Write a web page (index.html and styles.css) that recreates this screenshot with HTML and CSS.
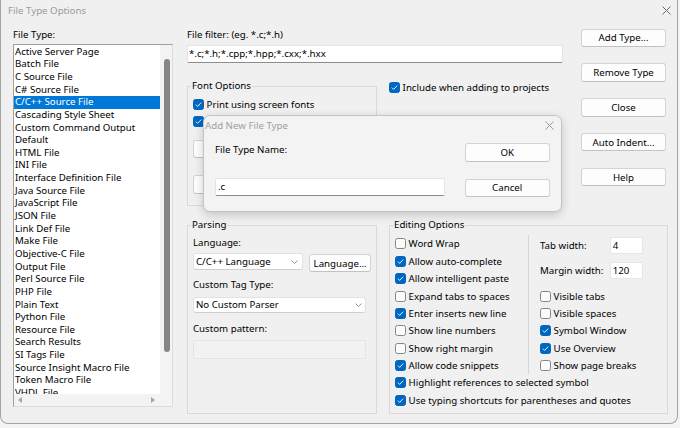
FILE: index.html
```html
<!DOCTYPE html>
<html>
<head>
<meta charset="utf-8">
<title>File Type Options</title>
<link rel="stylesheet" href="styles.css">
</head>
<body>
<div class="window">
  <div class="titlebar">
    <span class="title">File Type Options</span>
    <svg class="xicon" width="9" height="9" viewBox="0 0 9 9"><path d="M0.5 0.5 L8.5 8.5 M8.5 0.5 L0.5 8.5" stroke="#6f6f6f" stroke-width="1" fill="none"/></svg>
  </div>
  <div class="main">
    <div class="col-left">
      <div class="label">File Type:</div>
      <div class="listbox">
        <div class="items">
          <div class="item">Active Server Page</div>
          <div class="item">Batch File</div>
          <div class="item">C Source File</div>
          <div class="item">C# Source File</div>
          <div class="item sel">C/C++ Source File</div>
          <div class="item">Cascading Style Sheet</div>
          <div class="item">Custom Command Output</div>
          <div class="item">Default</div>
          <div class="item">HTML File</div>
          <div class="item">INI File</div>
          <div class="item">Interface Definition File</div>
          <div class="item">Java Source File</div>
          <div class="item">JavaScript File</div>
          <div class="item">JSON File</div>
          <div class="item">Link Def File</div>
          <div class="item">Make File</div>
          <div class="item">Objective-C File</div>
          <div class="item">Output File</div>
          <div class="item">Perl Source File</div>
          <div class="item">PHP File</div>
          <div class="item">Plain Text</div>
          <div class="item">Python File</div>
          <div class="item">Resource File</div>
          <div class="item">Search Results</div>
          <div class="item">SI Tags File</div>
          <div class="item">Source Insight Macro File</div>
          <div class="item">Token Macro File</div>
          <div class="item">VHDL File</div>
        </div>
        <div class="vscroll"><div class="thumb"></div></div>
        <div class="hscroll">
          <svg width="4" height="6" viewBox="0 0 4 6"><path d="M4 0 L0 3 L4 6 Z" fill="#a6a6a6"/></svg>
          <svg width="4" height="6" viewBox="0 0 4 6"><path d="M0 0 L4 3 L0 6 Z" fill="#a6a6a6"/></svg>
        </div>
        <div class="corner"></div>
      </div>
    </div>

    <div class="col-right">
      <div class="top">
        <div class="mid">
          <div class="label">File filter: (eg. *.c;*.h)</div>
          <div class="input filter">*.c;*.h;*.cpp;*.hpp;*.cxx;*.hxx</div>
          <div class="mid-row">
            <div class="group font-opts">
              <div class="legend">Font Options</div>
              <div class="cb first"><span class="box on"><svg width="9" height="9" viewBox="0 0 9 9"><path d="M1.8 4.6 L3.6 6.4 L7.2 2.6" stroke="#fff" stroke-width="0.9" fill="none"/></svg></span><span>Print using screen fonts</span></div>
              <div class="cb"><span class="box on"><svg width="9" height="9" viewBox="0 0 9 9"><path d="M1.8 4.6 L3.6 6.4 L7.2 2.6" stroke="#fff" stroke-width="0.9" fill="none"/></svg></span><span></span></div>
              <div class="btn fbtn1"></div>
              <div class="btn fbtn2"></div>
            </div>
            <div class="cb include"><span class="box on"><svg width="9" height="9" viewBox="0 0 9 9"><path d="M1.8 4.6 L3.6 6.4 L7.2 2.6" stroke="#fff" stroke-width="0.9" fill="none"/></svg></span><span>Include when adding to projects</span></div>
          </div>
        </div>
        <div class="buttons">
          <div class="btn">Add Type...</div>
          <div class="btn">Remove Type</div>
          <div class="btn">Close</div>
          <div class="btn">Auto Indent...</div>
          <div class="btn">Help</div>
        </div>
      </div>

      <div class="bottom">
        <div class="group parsing">
          <div class="legend">Parsing</div>
          <div class="label pl1">Language:</div>
          <div class="prow">
            <div class="select sel1"><span>C/C++ Language</span><svg width="7" height="4" viewBox="0 0 7 4"><path d="M0.5 0.5 L3.5 3.5 L6.5 0.5" stroke="#8a8a8a" stroke-width="0.9" fill="none"/></svg></div>
            <div class="btn lbtn">Language...</div>
          </div>
          <div class="label pl2">Custom Tag Type:</div>
          <div class="select sel2"><span>No Custom Parser</span><svg width="7" height="4" viewBox="0 0 7 4"><path d="M0.5 0.5 L3.5 3.5 L6.5 0.5" stroke="#8a8a8a" stroke-width="0.9" fill="none"/></svg></div>
          <div class="label pl3">Custom pattern:</div>
          <div class="dis"></div>
        </div>

        <div class="group editing">
          <div class="legend">Editing Options</div>
          <div class="egrid">
            <div class="ecol">
              <div class="cb"><span class="box"></span><span>Word Wrap</span></div>
              <div class="cb"><span class="box on"><svg width="9" height="9" viewBox="0 0 9 9"><path d="M1.8 4.6 L3.6 6.4 L7.2 2.6" stroke="#fff" stroke-width="0.9" fill="none"/></svg></span><span>Allow auto-complete</span></div>
              <div class="cb"><span class="box on"><svg width="9" height="9" viewBox="0 0 9 9"><path d="M1.8 4.6 L3.6 6.4 L7.2 2.6" stroke="#fff" stroke-width="0.9" fill="none"/></svg></span><span>Allow intelligent paste</span></div>
              <div class="cb"><span class="box"></span><span>Expand tabs to spaces</span></div>
              <div class="cb"><span class="box on"><svg width="9" height="9" viewBox="0 0 9 9"><path d="M1.8 4.6 L3.6 6.4 L7.2 2.6" stroke="#fff" stroke-width="0.9" fill="none"/></svg></span><span>Enter inserts new line</span></div>
              <div class="cb"><span class="box"></span><span>Show line numbers</span></div>
              <div class="cb"><span class="box"></span><span>Show right margin</span></div>
              <div class="cb"><span class="box on"><svg width="9" height="9" viewBox="0 0 9 9"><path d="M1.8 4.6 L3.6 6.4 L7.2 2.6" stroke="#fff" stroke-width="0.9" fill="none"/></svg></span><span>Allow code snippets</span></div>
            </div>
            <div class="ecol ecol-right">
              <div class="tabs">
                <div class="trow"><span class="tlabel">Tab width:</span><span class="num">4</span></div>
                <div class="trow"><span class="tlabel">Margin width:</span><span class="num">120</span></div>
              </div>
              <div class="cb"><span class="box"></span><span>Visible tabs</span></div>
              <div class="cb"><span class="box"></span><span>Visible spaces</span></div>
              <div class="cb"><span class="box on"><svg width="9" height="9" viewBox="0 0 9 9"><path d="M1.8 4.6 L3.6 6.4 L7.2 2.6" stroke="#fff" stroke-width="0.9" fill="none"/></svg></span><span>Symbol Window</span></div>
              <div class="cb"><span class="box on"><svg width="9" height="9" viewBox="0 0 9 9"><path d="M1.8 4.6 L3.6 6.4 L7.2 2.6" stroke="#fff" stroke-width="0.9" fill="none"/></svg></span><span>Use Overview</span></div>
              <div class="cb"><span class="box"></span><span>Show page breaks</span></div>
            </div>
            <div class="cb full"><span class="box on"><svg width="9" height="9" viewBox="0 0 9 9"><path d="M1.8 4.6 L3.6 6.4 L7.2 2.6" stroke="#fff" stroke-width="0.9" fill="none"/></svg></span><span>Highlight references to selected symbol</span></div>
            <div class="cb full"><span class="box on"><svg width="9" height="9" viewBox="0 0 9 9"><path d="M1.8 4.6 L3.6 6.4 L7.2 2.6" stroke="#fff" stroke-width="0.9" fill="none"/></svg></span><span>Use typing shortcuts for parentheses and quotes</span></div>
          </div>
        </div>
      </div>
    </div>
  </div>

  <div class="dialog">
    <div class="dtitle">
      <span>Add New File Type</span>
      <svg width="9" height="9" viewBox="0 0 9 9"><path d="M0.5 0.5 L8.5 8.5 M8.5 0.5 L0.5 8.5" stroke="#9a9a9a" stroke-width="1" fill="none"/></svg>
    </div>
    <div class="dbody">
      <div class="dleft">
        <div class="label dlabel">File Type Name:</div>
        <div class="input dinput">.c</div>
      </div>
      <div class="dbtns">
        <div class="btn ok">OK</div>
        <div class="btn cancel">Cancel</div>
      </div>
    </div>
  </div>
</div>
</body>
</html>
```

FILE: styles.css
```css
* { box-sizing: border-box; }
html, body { margin: 0; padding: 0; }
body {
  width: 680px;
  height: 428px;
  overflow: hidden;
  background: #f4f4f4;
  font-family: "Noto Sans", "Open Sans", sans-serif;
  font-size: 9.7px;
  color: #000;
}

.window {
  position: relative;
  width: 678px;
  height: 424px;
  background: #f0f0f0;
  border: 1px solid #a3a3a3;
  border-top: none;
  border-radius: 0 0 8px 8px;
}

.titlebar {
  height: 20px;
  display: flex;
  align-items: center;
  justify-content: space-between;
  padding: 0 6px 0 7px;
  color: #9b9b9b;
}
.xicon { display: block; }

.main {
  display: grid;
  grid-template-columns: 160px 481px;
  column-gap: 14px;
  padding: 9px 0 0 12px;
}

.label { line-height: 12px; height: 12px; white-space: nowrap; }

/* list box */
.listbox {
  margin-top: 3px;
  height: 363px;
  border: 1px solid;
  border-color: #a0a0a0 #dcdcdc #dcdcdc #a0a0a0;
  background: #fff;
  display: grid;
  grid-template-columns: 146px 12px;
  grid-template-rows: 349px 12px;
}
.items { overflow: hidden; padding-top: 0.7px; }
.item {
  height: 12.65px;
  line-height: 12.65px;
  padding-left: 1px;
  white-space: nowrap;
}
.item.sel { background: #0078d7; color: #fff; }
.vscroll { background: #f3f3f3; padding-top: 14.3px; }
.thumb {
  width: 6px;
  height: 292.5px;
  margin-left: 4px;
  background: #868686;
  border-radius: 3px;
}
.hscroll {
  background: #f3f3f3;
  display: flex;
  justify-content: space-between;
  align-items: center;
  padding: 0 5px 0 4px;
}
.hscroll svg { display: block; }
.corner { background: #f3f3f3; }

/* right side */
.col-right { display: flex; flex-direction: column; }
.top { display: flex; gap: 18px; }
.mid { width: 376px; }

.input {
  background: #fff;
  border: 1px solid #e4e4e4;
  border-bottom-color: #8c8c8c;
  border-radius: 2px;
  height: 18px;
  line-height: 16px;
  padding-left: 1px;
  white-space: nowrap;
  overflow: hidden;
}
.filter { margin-top: 4px; }
.mid-row { display: flex; align-items: flex-start; margin-top: 23px; }

/* group boxes */
.group {
  border: 1px solid #d9d9d9;
  padding: 0 5px;
}
.legend {
  width: fit-content;
  margin: -7px 0 0 -2px;
  padding: 0 1px;
  line-height: 12px;
  height: 12px;
  background: #f0f0f0;
  white-space: nowrap;
}

.font-opts { width: 190px; height: 120px; }
.font-opts .first { margin-top: 3.6px; }
.fbtn1 { width: 90px; height: 19px; margin-top: 9.6px; }
.fbtn2 { width: 90px; height: 18px; margin-top: 17px; }

.cb {
  display: flex;
  align-items: center;
  gap: 2.6px;
  height: 17.35px;
  white-space: nowrap;
}
.box {
  flex: none;
  width: 11px;
  height: 11px;
  border: 1px solid #858585;
  border-radius: 2.5px;
  background: #fbfbfb;
}
.box.on { background: #0067c0; border-color: #0067c0; }
.box svg { display: block; }

.include { margin-left: 12px; margin-top: -7px; }

.buttons {
  width: 85px;
  display: flex;
  flex-direction: column;
  gap: 16.4px;
  margin-top: -0.3px;
}
.btn {
  height: 18.4px;
  background: #fdfdfd;
  border: 1px solid #d4d4d4;
  border-bottom-color: #c2c2c2;
  border-radius: 3px;
  display: flex;
  align-items: center;
  justify-content: center;
  white-space: nowrap;
}

.bottom { display: flex; gap: 12px; margin-top: 19px; }
.parsing { width: 190px; height: 189px; }
.editing { width: 279px; height: 189px; }

.pl1 { margin-top: 5.7px; }
.prow { display: flex; align-items: flex-start; margin-top: 4.6px; }
.select {
  background: #fff;
  border: 1px solid #e2e2e2;
  border-bottom-color: #cfcfcf;
  border-radius: 3px;
  display: flex;
  align-items: center;
  justify-content: space-between;
  padding: 0 3.5px 0 2px;
  white-space: nowrap;
}
.select svg { display: block; }
.sel1 { width: 109.6px; height: 17px; }
.lbtn { width: 61.7px; height: 18px; margin-left: 6.7px; margin-top: 1px; }
.pl2 { margin-top: 6.7px; }
.sel2 { width: 173px; height: 16px; margin-top: 5.7px; }
.pl3 { margin-top: 10.3px; }
.dis {
  width: 173px;
  height: 18.7px;
  margin-top: 5px;
  border: 1px solid #e4e4e4;
  background: #f2f2f2;
  border-radius: 2px;
}

.egrid {
  display: grid;
  grid-template-columns: 133px 1fr;
  padding-top: 4.3px;
}
.ecol-right { border-left: 1px solid #d6d6d6; padding-left: 11px; }
.tabs { height: 52.05px; padding-top: 1.4px; }
.trow { display: flex; align-items: center; height: 17.5px; white-space: nowrap; }
.trow + .trow { margin-top: 7.5px; }
.tlabel { width: 70px; }
.num {
  width: 33.3px;
  height: 17.5px;
  background: #fff;
  border: 1px solid #e6e6e6;
  padding-left: 1.7px;
  line-height: 15.5px;
}
.full { grid-column: 1 / span 2; }

/* dialog overlay */
.dialog {
  position: absolute;
  left: 202px;
  top: 115px;
  width: 359px;
  height: 97px;
  background: #f3f3f3;
  border: 1px solid #c4c4c4;
  border-radius: 7px;
  box-shadow: 0 3px 10px rgba(0, 0, 0, 0.18);
}
.dtitle {
  height: 19px;
  display: flex;
  align-items: center;
  justify-content: space-between;
  padding: 0 7.5px 0 1px;
  color: #a0a0a0;
}
.dtitle svg { display: block; }
.dbody { display: flex; gap: 19.7px; padding: 8px 0 0 11px; }
.dleft { width: 230px; }
.dlabel { margin-top: 1px; }
.dinput { margin-top: 22.3px; padding-left: 2px; }
.dbtns { width: 85px; display: flex; flex-direction: column; }
.ok { height: 19px; margin-top: 0.3px; }
.cancel { height: 18.6px; margin-top: 16.4px; }
```
